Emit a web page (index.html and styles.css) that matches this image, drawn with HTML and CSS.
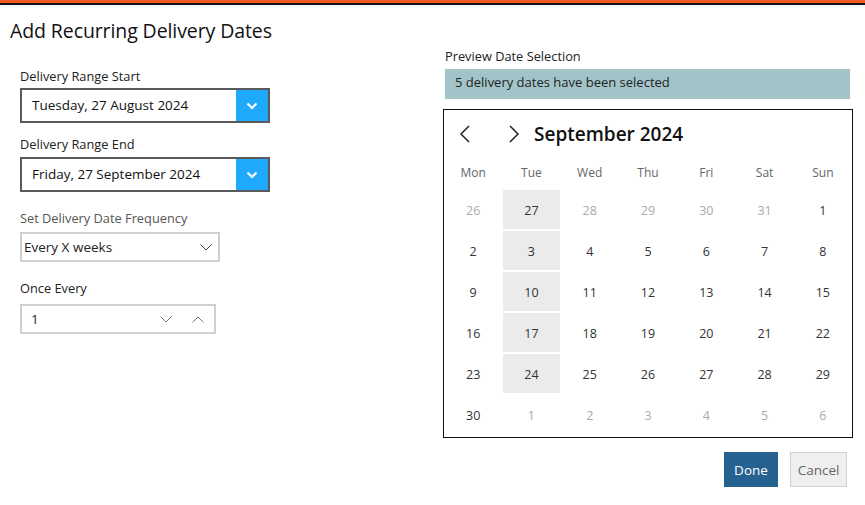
FILE: index.html
```html
<!DOCTYPE html>
<html>
<head>
<meta charset="utf-8">
<link rel="stylesheet" href="styles.css">
</head>
<body>
<div class="topbar"></div>
<div class="dialog">
  <div class="left">
    <h1 class="title">Add Recurring Delivery Dates</h1>
    <div class="form">
      <label class="label">Delivery Range Start</label>
      <div class="datepick">
        <span class="dp-text">Tuesday, 27 August 2024</span>
        <span class="dp-btn"><svg width="12" height="8" viewBox="0 0 12 8"><polyline points="1.5,1.5 6,6 10.5,1.5" fill="none" stroke="#fff" stroke-width="2.2"/></svg></span>
      </div>
      <label class="label gap1">Delivery Range End</label>
      <div class="datepick">
        <span class="dp-text">Friday, 27 September 2024</span>
        <span class="dp-btn"><svg width="12" height="8" viewBox="0 0 12 8"><polyline points="1.5,1.5 6,6 10.5,1.5" fill="none" stroke="#fff" stroke-width="2.2"/></svg></span>
      </div>
      <label class="label muted gap2">Set Delivery Date Frequency</label>
      <div class="select">
        <span>Every X weeks</span>
        <svg width="12" height="7" viewBox="0 0 12 7"><polyline points="0.5,0.5 6,6 11.5,0.5" fill="none" stroke="#444" stroke-width="1"/></svg>
      </div>
      <label class="label gap2">Once Every</label>
      <div class="spinner">
        <span class="sp-val">1</span>
        <span class="sp-btns">
          <svg width="12" height="7" viewBox="0 0 12 7"><polyline points="0.5,0.5 6,6 11.5,0.5" fill="none" stroke="#777" stroke-width="1"/></svg>
          <svg width="12" height="7" viewBox="0 0 12 7"><polyline points="0.5,6.5 6,1 11.5,6.5" fill="none" stroke="#777" stroke-width="1"/></svg>
        </span>
      </div>
    </div>
  </div>
  <div class="right">
    <div class="label">Preview Date Selection</div>
    <div class="banner">5 delivery dates have been selected</div>
    <div class="calendar">
      <div class="cal-head">
        <svg class="nav" width="14" height="20" viewBox="0 0 14 20"><polyline points="11,2 3,10 11,18" fill="none" stroke="#222" stroke-width="1.5"/></svg>
        <svg class="nav" width="14" height="20" viewBox="0 0 14 20"><polyline points="3,2 11,10 3,18" fill="none" stroke="#222" stroke-width="1.5"/></svg>
        <span class="month">September 2024</span>
      </div>
      <div class="cal-grid">
        <div class="dow">Mon</div><div class="dow">Tue</div><div class="dow">Wed</div><div class="dow">Thu</div><div class="dow">Fri</div><div class="dow">Sat</div><div class="dow">Sun</div>
        <div class="day out">26</div><div class="day sel">27</div><div class="day out">28</div><div class="day out">29</div><div class="day out">30</div><div class="day out">31</div><div class="day">1</div>
        <div class="day">2</div><div class="day sel">3</div><div class="day">4</div><div class="day">5</div><div class="day">6</div><div class="day">7</div><div class="day">8</div>
        <div class="day">9</div><div class="day sel">10</div><div class="day">11</div><div class="day">12</div><div class="day">13</div><div class="day">14</div><div class="day">15</div>
        <div class="day">16</div><div class="day sel">17</div><div class="day">18</div><div class="day">19</div><div class="day">20</div><div class="day">21</div><div class="day">22</div>
        <div class="day">23</div><div class="day sel">24</div><div class="day">25</div><div class="day">26</div><div class="day">27</div><div class="day">28</div><div class="day">29</div>
        <div class="day">30</div><div class="day out">1</div><div class="day out">2</div><div class="day out">3</div><div class="day out">4</div><div class="day out">5</div><div class="day out">6</div>
      </div>
    </div>
    <div class="actions">
      <button class="btn primary">Done</button>
      <button class="btn secondary">Cancel</button>
    </div>
  </div>
</div>
</body>
</html>
```

FILE: styles.css
```css
* { box-sizing: border-box; }
html, body { margin: 0; padding: 0; background: #fff; }
body {
  font-family: "Open Sans", "Noto Sans", sans-serif;
  color: #222;
  width: 865px;
  height: 505px;
  overflow: hidden;
}
.topbar {
  height: 5px;
  background: #f05a22;
  border-bottom: 2px solid #141414;
}
.dialog {
  display: flex;
}
.left {
  width: 443px;
  padding-left: 10px;
}
.title {
  margin: 14px 0 0 0;
  font-size: 19.5px;
  line-height: 24px;
  font-weight: 400;
  color: #111;
  letter-spacing: -0.1px;
}
.form {
  padding-left: 10px;
  padding-top: 23px;
  display: flex;
  flex-direction: column;
  align-items: flex-start;
}
.label {
  display: block;
  font-size: 12.8px;
  line-height: 18px;
  color: #222;
  margin-bottom: 4px;
}
.form > .label:first-child { margin-top: 1px; margin-bottom: 3px; }
.label.muted { color: #555; }
.label.gap1 { margin-top: 12px; }
.label.gap2 { margin-top: 17px; }
.datepick {
  width: 250px;
  height: 35px;
  border: 2px solid #5a5a5a;
  display: flex;
  align-items: stretch;
}
.dp-text {
  flex: 1;
  padding-left: 10px;
  font-size: 13.5px;
  line-height: 31px;
  color: #111;
}
.dp-btn {
  width: 32px;
  background: #1fa9fb;
  display: flex;
  align-items: center;
  justify-content: center;
}
.select {
  width: 200px;
  height: 30px;
  border: 2px solid #cfcfcf;
  display: flex;
  align-items: center;
  justify-content: space-between;
  padding: 0 6px 0 2px;
  font-size: 13.5px;
  color: #222;
  margin-top: 1px;
}
.spinner {
  width: 196px;
  height: 30px;
  border: 2px solid #cfcfcf;
  display: flex;
  align-items: center;
  justify-content: space-between;
  padding: 0 10px 0 9px;
  font-size: 13.5px;
  color: #222;
  margin-top: 3px;
}
.sp-btns {
  display: flex;
  gap: 20px;
  align-items: center;
}
.right {
  width: 410px;
  padding-top: 42px;
}
.right .label { padding-left: 2px; margin-bottom: 4px; }
.banner {
  margin-left: 2px;
  width: 405px;
  height: 30px;
  background: #a2c4c9;
  font-size: 13px;
  line-height: 27px;
  padding-left: 10px;
  color: #222;
}
.calendar {
  margin-top: 10px;
  width: 410px;
  height: 329px;
  border: 1.5px solid #111;
}
.cal-head {
  display: flex;
  align-items: center;
  height: 47px;
  padding-left: 14px;
}
.cal-head .nav { margin-right: 35px; }
.cal-head .nav + .nav { margin-right: 13px; }
.month {
  font-size: 19px;
  font-weight: 600;
  color: #111;
}
.cal-grid {
  display: grid;
  grid-template-columns: repeat(7, 1fr);
  grid-template-rows: 32px repeat(6, 41px);
}
.dow {
  font-size: 12px;
  color: #666;
  text-align: center;
  line-height: 32px;
}
.day {
  margin: 1px 1px;
  display: flex;
  align-items: center;
  justify-content: center;
  padding-top: 2px;
  font-size: 12.5px;
  color: #333;
}
.day.out { color: #aaa; }
.day.sel { background: #ebebeb; }
.actions {
  display: flex;
  justify-content: flex-end;
  gap: 12px;
  margin-top: 14px;
  padding-right: 6px;
}
.btn {
  height: 35px;
  font-family: inherit;
  font-size: 13.5px;
  border: 1px solid transparent;
  cursor: pointer;
}
.btn.primary {
  width: 54px;
  background: #25628f;
  color: #fff;
}
.btn.secondary {
  width: 57px;
  background: #efefef;
  color: #666;
  border-color: #cfcfcf;
}
```
